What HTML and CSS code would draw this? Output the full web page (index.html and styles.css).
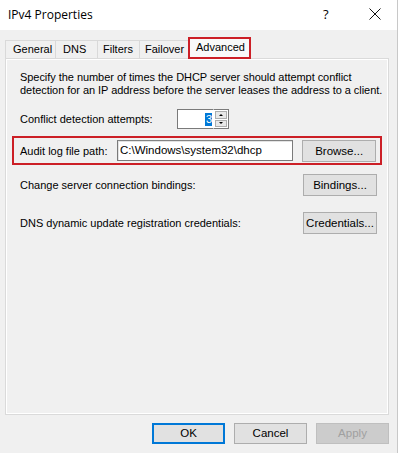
FILE: index.html
```html
<!DOCTYPE html>
<html>
<head>
<meta charset="utf-8">
<link rel="stylesheet" href="styles.css">
</head>
<body>
<div class="window">
  <div class="titlebar">
    <span class="title">IPv4 Properties</span>
    <span class="tb-help">?</span>
    <span class="tb-close">
      <svg width="12" height="12" viewBox="0 0 12 12"><path d="M0.5 0.5 L11.5 11.5 M11.5 0.5 L0.5 11.5" stroke="#111" stroke-width="1" fill="none"/></svg>
    </span>
  </div>
  <div class="tabs">
    <div class="tab tab-general">General</div>
    <div class="tab tab-dns">DNS</div>
    <div class="tab tab-filters">Filters</div>
    <div class="tab tab-failover">Failover</div>
    <div class="tab tab-active">Advanced</div>
  </div>
  <div class="panel">
    <p class="desc">Specify the number of times the DHCP server should attempt conflict detection for an IP address before the server leases the address to a client.</p>
    <div class="row row-conflict">
      <span class="label">Conflict detection attempts:</span>
      <div class="spinner">
        <div class="spin-box"><span class="spin-val">3</span></div>
        <div class="spin-btns">
          <div class="spin-btn"><span class="arrow-up"></span></div>
          <div class="spin-btn"><span class="arrow-down"></span></div>
        </div>
      </div>
    </div>
    <div class="row row-audit">
      <span class="label label-audit">Audit log file path:</span>
      <div class="textbox">C:\Windows\system32\dhcp</div>
      <div class="btn">Browse...</div>
    </div>
    <div class="row row-bind">
      <span class="label">Change server connection bindings:</span>
      <div class="btn">Bindings...</div>
    </div>
    <div class="row row-cred">
      <span class="label">DNS dynamic update registration credentials:</span>
      <div class="btn">Credentials...</div>
    </div>
  </div>
  <div class="footer">
    <div class="btn btn-foot btn-default">OK</div>
    <div class="btn btn-foot">Cancel</div>
    <div class="btn btn-foot btn-disabled">Apply</div>
  </div>
</div>
</body>
</html>
```
FILE: styles.css
```css
html, body {
  margin: 0;
  padding: 0;
}
body {
  width: 398px;
  height: 453px;
  overflow: hidden;
  background: #f0f0f0;
  font-family: "Liberation Sans", Arial, sans-serif;
  font-size: 11px;
  color: #000;
}
.window {
  width: 397px;
  height: 453px;
  border-right: 1px solid #c8c8c8;
  display: flex;
  flex-direction: column;
}
.titlebar {
  height: 30px;
  background: #fff;
  display: flex;
  align-items: center;
  padding-left: 8px;
  flex-shrink: 0;
}
.title {
  font-family: "Open Sans", "Noto Sans", sans-serif;
  font-size: 12px;
  flex: 1;
  margin-top: -2px;
}
.tb-help {
  font-family: "Open Sans", sans-serif;
  font-size: 13px;
  width: 20px;
  margin-right: 26px;
  margin-top: -2px;
}
.tb-close {
  width: 12px;
  height: 12px;
  margin-right: 16px;
  display: flex;
  margin-top: -2px;
}
.tabs {
  display: flex;
  align-items: flex-end;
  height: 28px;
  padding-left: 5px;
  flex-shrink: 0;
  position: relative;
  z-index: 2;
}
.tab {
  height: 18px;
  box-sizing: border-box;
  border: 1px solid #d9d9d9;
  border-bottom: none;
  border-right: none;
  background: #f0f0f0;
  font-size: 11px;
  line-height: 17px;
  white-space: nowrap;
}
.tab-general { width: 50px; padding-left: 7px; }
.tab-dns { width: 42px; padding-left: 7px; }
.tab-filters { width: 42px; padding-left: 5px; }
.tab-failover { width: 49px; padding-left: 5px; }
.tab-active {
  width: 63px;
  height: 22px;
  border: 2px solid #cc1f26;
  background: #f9f9f9;
  margin-bottom: -1px;
  padding: 0 0 0 6px;
  line-height: 17px;
}
.panel {
  margin-left: 5px;
  width: 384px;
  height: 357px;
  box-sizing: border-box;
  border: 1px solid #dadada;
  box-shadow: inset 1px 1px 0 #fff, inset -1px -1px 0 #fff;
  padding: 12px 4px 0 14px;
  display: flex;
  flex-direction: column;
  flex-shrink: 0;
}
.desc {
  margin: 0;
  line-height: 13px;
  letter-spacing: -0.05px;
}
.row {
  display: flex;
  align-items: center;
}
.label {
  flex: 1;
}
.row-conflict {
  margin-top: 12px;
  height: 20px;
}
.spinner {
  display: flex;
  margin-right: 155px;
  height: 20px;
}
.spin-box {
  width: 36px;
  height: 20px;
  box-sizing: border-box;
  border: 1px solid #7a7a7a;
  border-right: none;
  background: #fff;
  display: flex;
  justify-content: flex-end;
  align-items: center;
  padding-right: 1px;
}
.spin-val {
  background: #0078d7;
  color: #fff;
  line-height: 13px;
  padding: 0 0 0 1px;
}
.spin-btns {
  width: 16px;
  display: flex;
  flex-direction: column;
  border: 1px solid #7a7a7a;
  border-left: 1px solid #fff;
  box-sizing: border-box;
  background: #fff;
  padding: 1px;
  gap: 1px;
}
.spin-btn {
  flex: 1;
  background: #e8e8e8;
  border: 1px solid #adadad;
  display: flex;
  align-items: center;
  justify-content: center;
}
.arrow-up {
  width: 0;
  height: 0;
  border-left: 2px solid transparent;
  border-right: 2px solid transparent;
  border-bottom: 2px solid #000;
}
.arrow-down {
  width: 0;
  height: 0;
  border-left: 2px solid transparent;
  border-right: 2px solid transparent;
  border-top: 2px solid #000;
}
.row-audit {
  margin-top: 7px;
  margin-left: -8px;
  width: 370px;
  height: 29px;
  box-sizing: border-box;
  border: 2px solid #cc1f26;
  padding: 0 4px 0 6px;
}
.label-audit {
  flex: none;
  width: 97px;
}
.textbox {
  width: 177px;
  height: 21px;
  box-sizing: border-box;
  border: 1px solid #7a7a7a;
  border-top-color: #838383;
  background: #fff;
  padding: 2px 0 0 2px;
  line-height: 15px;
  font-size: 11.5px;
  margin-right: 9px;
  box-shadow: inset 1px 1px 0 #e3e3e3;
}
.btn {
  width: 74px;
  height: 22px;
  box-sizing: border-box;
  border: 1px solid #adadad;
  background: #e1e1e1;
  text-align: center;
  line-height: 20px;
  font-size: 11.5px;
}
.row-bind {
  margin-top: 9px;
  height: 22px;
}
.row-bind .btn, .row-cred .btn {
  margin-right: 7px;
}
.row-cred {
  margin-top: 16px;
  height: 22px;
}
.footer {
  display: flex;
  justify-content: flex-end;
  gap: 9px;
  padding-right: 8px;
  margin-top: 8px;
}
.btn-foot {
  width: 73px;
  height: 21px;
  line-height: 19px;
}
.btn-default {
  border: 2px solid #0078d7;
  line-height: 17px;
}
.btn-disabled {
  background: #cccccc;
  border-color: #bfbfbf;
  color: #a0a0a0;
}
```
